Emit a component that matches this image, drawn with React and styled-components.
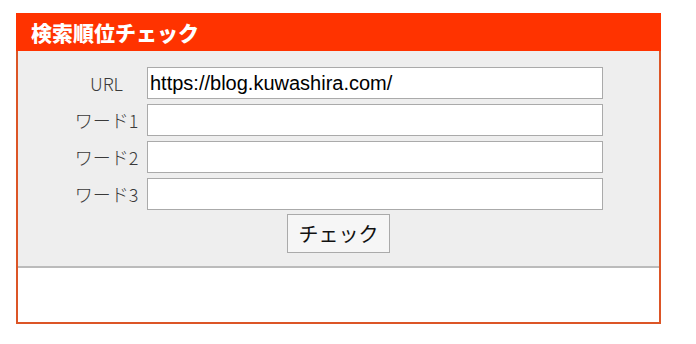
import React from "react";
import styled, { createGlobalStyle } from "styled-components";

const GlobalStyle = createGlobalStyle`
  body {
    margin: 0;
    background: #fff;
    font-family: "Liberation Sans", "Noto Sans CJK JP", sans-serif;
  }
`;

const Box = styled.div`
  width: 645px;
  margin: 13px 0 0 16px;
`;

const Title = styled.h2`
  margin: 0;
  height: 38px;
  padding-left: 15px;
  background: #ff3300;
  color: #fff;
  font-size: 21px;
  font-weight: 900;
  line-height: 38px;
  font-family: "Noto Sans CJK JP", sans-serif;
`;

const Frame = styled.div`
  border: 2px solid #dc5526;
  border-top: none;
`;

const Form = styled.form`
  background: #eeeeee;
  border-bottom: 2px solid #bbbbbb;
  padding: 16px 0 13px 48px;
  display: flex;
  flex-direction: column;
  gap: 5px;
`;

const Row = styled.div`
  display: flex;
  align-items: center;
`;

const Label = styled.label`
  width: 81px;
  text-align: center;
  font-size: 18px;
  font-weight: 300;
  color: #3a3a3a;
  font-family: "Noto Sans CJK JP", sans-serif;
`;

const Field = styled.input`
  box-sizing: border-box;
  width: 456px;
  height: 32px;
  margin: 0;
  padding: 0 2px;
  border: 1px solid #aaaaaa;
  background: #fff;
  font-family: "Liberation Sans", Arial, sans-serif;
  font-size: 20px;
  color: #000;
  outline: none;
`;

const Actions = styled.div`
  display: flex;
  justify-content: center;
  margin: -1px 0 0 -48px;
`;

const Button = styled.button`
  box-sizing: border-box;
  width: 103px;
  height: 39px;
  border: 1px solid #aaaaaa;
  background: #f6f6f6;
  font-family: "Noto Sans CJK JP", sans-serif;
  font-size: 20px;
  color: #111;
  padding: 0;
`;

const Result = styled.div`
  height: 54px;
  background: #fff;
`;

const words = ["ワード1", "ワード2", "ワード3"];

export default function App() {
  return (
    <>
      <GlobalStyle />
      <Box>
        <Title>検索順位チェック</Title>
        <Frame>
          <Form onSubmit={(e) => e.preventDefault()}>
            <Row>
              <Label>URL</Label>
              <Field defaultValue="https://blog.kuwashira.com/" />
            </Row>
            {words.map((w) => (
              <Row key={w}>
                <Label>{w}</Label>
                <Field />
              </Row>
            ))}
            <Actions>
              <Button type="submit">チェック</Button>
            </Actions>
          </Form>
          <Result />
        </Frame>
      </Box>
    </>
  );
}
